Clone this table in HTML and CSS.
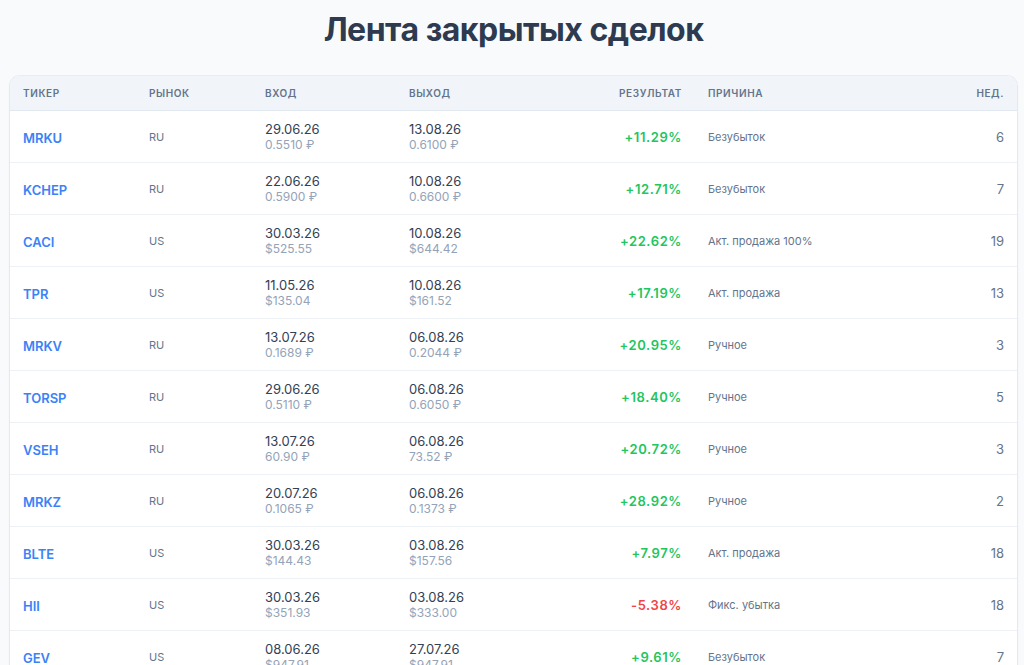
FILE: index.html
```html
<!DOCTYPE html>
<html lang="ru">
<head>
<meta charset="utf-8">
<link rel="stylesheet" href="styles.css">
</head>
<body>
<main class="page">
  <h1 class="title">Лента закрытых сделок</h1>
  <div class="card">
    <table class="trades">
      <colgroup>
        <col class="c-ticker"><col class="c-market"><col class="c-entry"><col class="c-exit"><col class="c-result"><col class="c-reason"><col class="c-weeks">
      </colgroup>
      <thead>
        <tr><th>Тикер</th><th>Рынок</th><th>Вход</th><th>Выход</th><th class="r">Результат</th><th>Причина</th><th class="r">Нед.</th></tr>
      </thead>
      <tbody>
        <tr><td class="tk">MRKU</td><td class="mk">RU</td><td class="dt"><div class="d">29.06.26</div><div class="p">0.5510 ₽</div></td><td class="dt"><div class="d">13.08.26</div><div class="p">0.6100 ₽</div></td><td class="r res up">+11.29%</td><td class="rs">Безубыток</td><td class="r wk">6</td></tr>
        <tr><td class="tk">KCHEP</td><td class="mk">RU</td><td class="dt"><div class="d">22.06.26</div><div class="p">0.5900 ₽</div></td><td class="dt"><div class="d">10.08.26</div><div class="p">0.6600 ₽</div></td><td class="r res up">+12.71%</td><td class="rs">Безубыток</td><td class="r wk">7</td></tr>
        <tr><td class="tk">CACI</td><td class="mk">US</td><td class="dt"><div class="d">30.03.26</div><div class="p">$525.55</div></td><td class="dt"><div class="d">10.08.26</div><div class="p">$644.42</div></td><td class="r res up">+22.62%</td><td class="rs">Акт. продажа 100%</td><td class="r wk">19</td></tr>
        <tr><td class="tk">TPR</td><td class="mk">US</td><td class="dt"><div class="d">11.05.26</div><div class="p">$135.04</div></td><td class="dt"><div class="d">10.08.26</div><div class="p">$161.52</div></td><td class="r res up">+17.19%</td><td class="rs">Акт. продажа</td><td class="r wk">13</td></tr>
        <tr><td class="tk">MRKV</td><td class="mk">RU</td><td class="dt"><div class="d">13.07.26</div><div class="p">0.1689 ₽</div></td><td class="dt"><div class="d">06.08.26</div><div class="p">0.2044 ₽</div></td><td class="r res up">+20.95%</td><td class="rs">Ручное</td><td class="r wk">3</td></tr>
        <tr><td class="tk">TORSP</td><td class="mk">RU</td><td class="dt"><div class="d">29.06.26</div><div class="p">0.5110 ₽</div></td><td class="dt"><div class="d">06.08.26</div><div class="p">0.6050 ₽</div></td><td class="r res up">+18.40%</td><td class="rs">Ручное</td><td class="r wk">5</td></tr>
        <tr><td class="tk">VSEH</td><td class="mk">RU</td><td class="dt"><div class="d">13.07.26</div><div class="p">60.90 ₽</div></td><td class="dt"><div class="d">06.08.26</div><div class="p">73.52 ₽</div></td><td class="r res up">+20.72%</td><td class="rs">Ручное</td><td class="r wk">3</td></tr>
        <tr><td class="tk">MRKZ</td><td class="mk">RU</td><td class="dt"><div class="d">20.07.26</div><div class="p">0.1065 ₽</div></td><td class="dt"><div class="d">06.08.26</div><div class="p">0.1373 ₽</div></td><td class="r res up">+28.92%</td><td class="rs">Ручное</td><td class="r wk">2</td></tr>
        <tr><td class="tk">BLTE</td><td class="mk">US</td><td class="dt"><div class="d">30.03.26</div><div class="p">$144.43</div></td><td class="dt"><div class="d">03.08.26</div><div class="p">$157.56</div></td><td class="r res up">+7.97%</td><td class="rs">Акт. продажа</td><td class="r wk">18</td></tr>
        <tr><td class="tk">HII</td><td class="mk">US</td><td class="dt"><div class="d">30.03.26</div><div class="p">$351.93</div></td><td class="dt"><div class="d">03.08.26</div><div class="p">$333.00</div></td><td class="r res down">-5.38%</td><td class="rs">Фикс. убытка</td><td class="r wk">18</td></tr>
        <tr><td class="tk">GEV</td><td class="mk">US</td><td class="dt"><div class="d">08.06.26</div><div class="p">$947.91</div></td><td class="dt"><div class="d">27.07.26</div><div class="p">$947.91</div></td><td class="r res up">+9.61%</td><td class="rs">Безубыток</td><td class="r wk">7</td></tr>
      </tbody>
    </table>
  </div>
</main>
</body>
</html>
```

FILE: styles.css
```css
html, body {
  margin: 0;
  padding: 0;
  background: #f8fafc;
  font-family: Inter, "Noto Sans", "Liberation Sans", sans-serif;
  color: #334155;
}
.page {
  padding: 10px 7px 0 10px;
}
.title {
  margin: 0 0 26px;
  text-align: center;
  font-size: 32px;
  line-height: 40px;
  font-weight: 700;
  color: #2d3a4f;
  letter-spacing: -0.5px;
}
.card {
  background: #fff;
  border-radius: 10px;
  box-shadow: 0 1px 3px rgba(15, 23, 42, 0.08), 0 0 0 1px rgba(226, 232, 240, 0.6);
  overflow: hidden;
}
.trades {
  width: 100%;
  border-collapse: collapse;
  table-layout: fixed;
}
.c-ticker { width: 126px; }
.c-market { width: 116px; }
.c-entry { width: 144px; }
.c-exit { width: 144px; }
.c-result { width: 155px; }
.c-reason { width: 215px; }
.c-weeks { width: auto; }
th {
  background: #f1f5f9;
  height: 34px;
  padding: 0 13px;
  text-align: left;
  font-size: 10px;
  font-weight: 600;
  letter-spacing: 0.6px;
  text-transform: uppercase;
  color: #64748b;
  border-bottom: 1px solid #e2e8f0;
}
td {
  height: 52px;
  box-sizing: border-box;
  padding: 0 13px;
  border-bottom: 1px solid #edf1f5;
  vertical-align: middle;
}
.r { text-align: right; }
.tk {
  color: #3b82f6;
  font-weight: 600;
  font-size: 13px;
  padding-top: 2px;
}
.mk {
  font-size: 11px;
  color: #64748b;
}
.dt {
  padding-top: 1px;
}
.d {
  font-size: 13px;
  line-height: 16px;
  color: #334155;
}
.p {
  font-size: 12px;
  line-height: 16px;
  color: #94a3b8;
}
.res {
  font-size: 13px;
  font-weight: 600;
  letter-spacing: 0.6px;
}
.up { color: #22c55e; }
.down { color: #ef4444; }
.rs {
  font-size: 11px;
  color: #64748b;
}
.wk {
  font-size: 13px;
  color: #64748b;
}
```
